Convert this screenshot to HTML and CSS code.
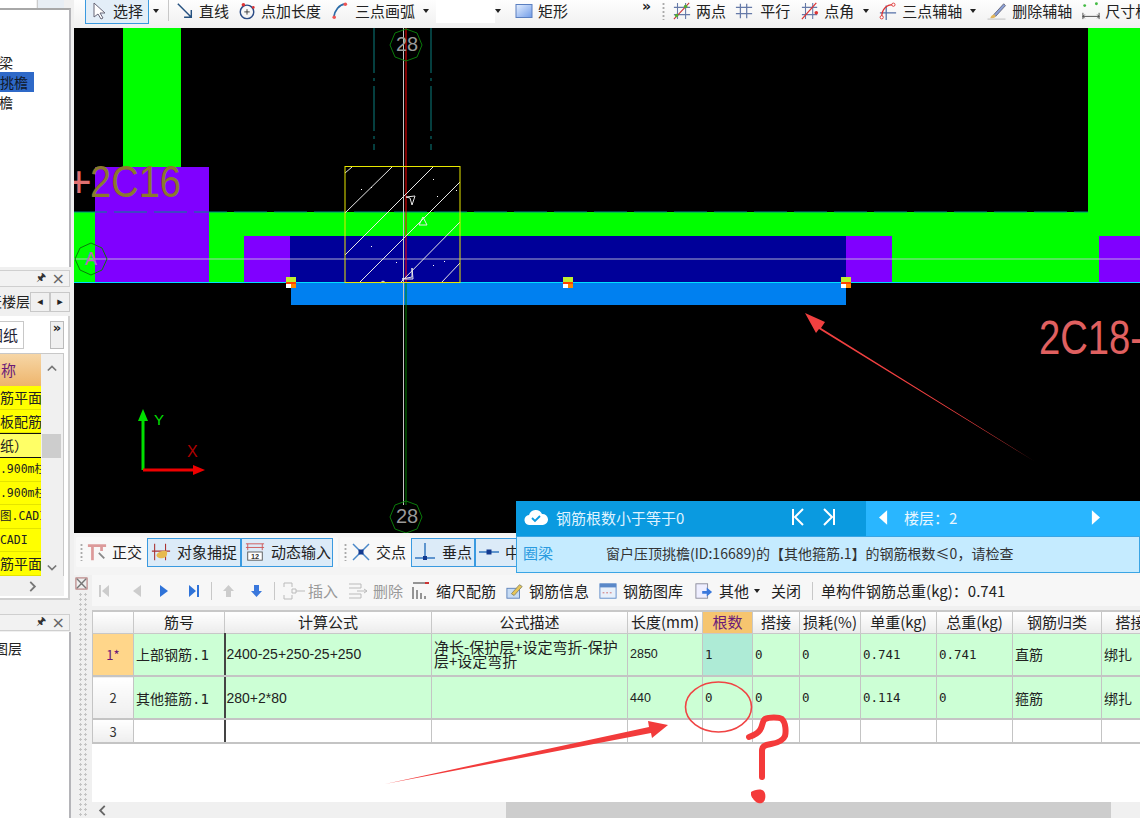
FILE: index.html
```html
<!DOCTYPE html>
<html lang="zh">
<head>
<meta charset="utf-8">
<title>钢筋</title>
<link rel="stylesheet" href="styles.css">
</head>
<body>
<div class="app">
  <aside class="left">
    <div class="stub"><div class="stub-a"></div><div class="stub-b"></div></div>
    <div class="tree">
      <div class="clip t1"><span>圈梁</span></div>
      <div class="clip t2"><span>窗户压顶挑檐</span></div>
      <div class="clip t3"><span>压顶挑檐</span></div>
    </div>
    <div class="phead"><span class="pin">🖈</span><span class="xx">×</span></div>
    <div class="floors">
      <div class="clip f1"><span>首层天楼层</span></div>
      <div class="fbtn">◂</div><div class="fbtn">▸</div>
    </div>
    <div class="body2">
      <div class="tabs">
        <div class="clip tab"><span>图纸</span></div>
        <div class="more">»</div>
      </div>
      <div class="listbox">
        <div class="list">
          <div class="clip lh"><span>名称</span></div>
          <div class="clip li c14"><span>钢筋平面图</span></div>
          <div class="clip li c14"><span>楼板配筋平面</span></div>
          <div class="clip li sel c14"><span>图纸）</span></div>
          <div class="clip li m c7"><span>3.900m柱</span></div>
          <div class="clip li m c7"><span>6.900m柱</span></div>
          <div class="clip li m"><span>图.CADI</span></div>
          <div class="clip li m c7"><span>.CADI</span></div>
          <div class="clip li c14"><span>钢筋平面图</span></div>
        </div>
        <div class="vbar">
          <svg class="chev" viewBox="0 0 12 8"><path d="M1 7l5-5 5 5" fill="none" stroke="#777" stroke-width="2"/></svg>
          <div class="vthumb"></div>
          <svg class="chev" viewBox="0 0 12 8"><path d="M1 1l5 5 5-5" fill="none" stroke="#777" stroke-width="2"/></svg>
        </div>
      </div>
      <div class="hbar"><svg class="chev2" viewBox="0 0 8 12"><path d="M1 1l5 5-5 5" fill="none" stroke="#777" stroke-width="2"/></svg></div>
    </div>
    <div class="phead p3"><span class="pin">🖈</span><span class="xx">×</span></div>
    <div class="tree2"><div class="clip l3"><span>图层</span></div></div>
  </aside>

  <main class="main">
    <div class="bar top">
      <div class="tool sel-tool">
        <svg class="ic i14" viewBox="0 0 14 18"><path d="M2 1v14l4-3 3 5 2-1-3-5h5z" fill="#fff" stroke="#667"/></svg><span>选择</span>
      </div>
      <span class="caret c1"></span><span class="sep s1"></span>
      <div class="tool t-line"><svg class="ic" viewBox="0 0 20 20"><path d="M2 2l15 15M17 9v8H9" fill="none" stroke="#25507f" stroke-width="1.6"/></svg><span>直线</span></div>
      <div class="tool t-len"><svg class="ic" viewBox="0 0 20 20"><circle cx="10" cy="11" r="7.5" fill="none" stroke="#2b4c86" stroke-width="1.6"/><path d="M7 11h6M10 8v6" stroke="#333"/><circle cx="6" cy="3" r="2" fill="#d33"/><circle cx="17" cy="6" r="1.5" fill="#d33"/></svg><span>点加长度</span></div>
      <div class="tool t-arc"><svg class="ic" viewBox="0 0 18 20"><path d="M2 17C3 9 8 3 15 2" fill="none" stroke="#2b6ca8" stroke-width="2"/><circle cx="2.500" cy="17" r="2" fill="#e55"/><circle cx="15" cy="2.500" r="2" fill="#e55"/></svg><span>三点画弧</span></div>
      <span class="caret c2"></span>
      <div class="combo"></div><span class="caret c3"></span>
      <div class="tool t-rect"><svg class="ic" viewBox="0 0 18 16"><defs><linearGradient id="rg" x1="0" y1="0" x2="1" y2="1"><stop offset="0" stop-color="#e6f0ff"/><stop offset="1" stop-color="#6f9be8"/></linearGradient></defs><rect x="1" y="1.500" width="16" height="13" fill="url(#rg)" stroke="#5a7fc0"/></svg><span>矩形</span></div>
      <span class="chev-more">»</span><span class="grip g-top"></span>
      <div class="tool t-two"><svg class="ic" viewBox="0 0 20 20"><path d="M5 1v18M14 1v18M1 6h18M1 14h18" stroke="#667aa8" stroke-width="1.200"/><path d="M1 19L18 1" stroke="#c33" stroke-width="1.200"/><circle cx="4" cy="15" r="2" fill="#5a3"/><circle cx="14" cy="5" r="2" fill="#5a3"/></svg><span>两点</span></div>
      <div class="tool t-par"><svg class="ic" viewBox="0 0 20 20"><path d="M6 2v16M13 2v16M1 6h18M1 13h18" stroke="#667aa8" stroke-width="1.400"/></svg><span>平行</span></div>
      <div class="tool t-ang"><svg class="ic" viewBox="0 0 20 20"><path d="M5 1v18M13 1v18M1 6h17M1 14h17" stroke="#667aa8" stroke-width="1.200"/><path d="M1 19L17 1" stroke="#d33" stroke-width="1.400"/><circle cx="17" cy="12" r="2" fill="#d33"/></svg><span>点角</span></div>
      <span class="caret c4"></span>
      <div class="tool t-axis"><svg class="ic" viewBox="0 0 20 20"><path d="M8 4v16M1 12h18" stroke="#5570a8" stroke-width="1.400"/><path d="M3 17C3 8 8 3 16 3" fill="none" stroke="#d33" stroke-width="1.400"/><circle cx="3" cy="17" r="1.800" fill="#fff" stroke="#d33"/><circle cx="16" cy="3" r="1.800" fill="#fff" stroke="#d33"/></svg><span>三点辅轴</span></div>
      <span class="caret c5"></span>
      <div class="tool t-del"><svg class="ic i21" viewBox="0 0 22 20"><path d="M8 14L19 2l2 2L10 16z" fill="#8aa0d8" stroke="#667"/><path d="M4 18c1-3 3-4 5-4l1 2c-1 2-3 2-6 2z" fill="#e2b65a"/><path d="M1 19h20" stroke="#bbb"/></svg><span>删除辅轴</span></div>
      <div class="tool t-dim"><svg class="ic" viewBox="0 0 20 20"><circle cx="3" cy="4" r="1.600" fill="#4b4"/><circle cx="16" cy="2" r="1.600" fill="#4b4"/><path d="M1 12v7M19 12v7M1 16h18M3 14l-2 2 2 2M17 14l2 2-2 2" fill="none" stroke="#444"/></svg><span>尺寸标注</span></div>
    </div>

    <div class="canvas">
      <svg class="cad" viewBox="74 28 1066 505">
        <rect x="74" y="28" width="1066" height="505" fill="#000"/>
        <rect x="123" y="28" width="58" height="140" fill="#00ff00"/>
        <rect x="1088" y="28" width="52" height="185" fill="#00ff00"/>
        <rect x="74" y="212" width="1066" height="70" fill="#00ff00"/>
        <rect x="95" y="167" width="114" height="115" fill="#8000ff"/>
        <rect x="244" y="236" width="648" height="46" fill="#8000ff"/>
        <rect x="290" y="236" width="556" height="46" fill="#000099"/>
        <rect x="1099" y="236" width="41" height="46" fill="#8000ff"/>
        <rect x="291" y="283" width="555" height="22" fill="#0080f0"/>
        <path d="M74 212H1088" stroke="#008a8a" stroke-dasharray="33 7"/>
        <path d="M374 28V150M431 28V150" stroke="#0a7f7f" stroke-dasharray="45 5 3 5"/>
        <path d="M74 282.500H1140" stroke="#00dfff"/>
        <path d="M74 259H1140" stroke="#c8c8d8" stroke-width="1" opacity=".85"/>
        <path d="M403.500 28V505" stroke="#c4c4c4"/>
        <path d="M406 28V283" stroke="#ff0000"/>
        <path d="M406 283V505" stroke="#008000"/>
        <g fill="none" stroke="#e8e8e8">
          <path d="M345 213L392 167M345 255L433 167M359 283L460 182M400 283L460 222M441 283L460 263M345 173L352 167"/>
          <path d="M406 197l9-1-3 9-2-7zM419 225l4-8 4 8zM402 279l10-2v-9l1 11zM380 283l3-2 3 2"/>
        </g>
        <g fill="#fff"><rect x="361" y="189" width="1" height="1"/><rect x="371" y="187" width="1" height="1"/><rect x="433" y="179" width="1" height="1"/><rect x="437" y="196" width="1" height="1"/><rect x="456" y="190" width="1" height="1"/><rect x="371" y="246" width="1" height="1"/><rect x="433" y="265" width="1" height="1"/><rect x="444" y="261" width="1" height="1"/><rect x="396" y="262" width="1" height="1"/></g>
        <rect x="345" y="166.500" width="115" height="116" fill="none" stroke="#e8e800" stroke-width="1"/>
        <g class="handle"><rect x="286" y="277" width="10" height="5" fill="#c0ee30"/><rect x="286" y="282" width="10" height="2" fill="#f40"/><rect x="286" y="284" width="5" height="4" fill="#fff"/><rect x="291" y="284" width="5" height="4" fill="#f80"/></g>
        <g class="handle"><rect x="563" y="277" width="10" height="5" fill="#c0ee30"/><rect x="563" y="282" width="10" height="2" fill="#f40"/><rect x="563" y="284" width="5" height="4" fill="#fff"/><rect x="568" y="284" width="5" height="4" fill="#f80"/></g>
        <g class="handle"><rect x="841" y="277" width="10" height="5" fill="#c0ee30"/><rect x="841" y="282" width="10" height="2" fill="#f40"/><rect x="841" y="284" width="5" height="4" fill="#fff"/><rect x="846" y="284" width="5" height="4" fill="#f80"/></g>
        <polygon points="406,29 417,33 422,45 417,57 406,61 395,57 390,45 395,33" fill="none" stroke="#0a7a0a"/>
        <polygon points="406,501 417,505 422,517 417,529 406,533 395,529 390,517 395,505" fill="none" stroke="#0a7a0a"/>
        <polygon points="91,243 102,248 107,259 102,270 91,275 80,270 75,259 80,248" fill="none" stroke="#0a7a0a"/>
        <text class="axis" x="407" y="51" text-anchor="middle">28</text>
        <text class="axis" x="407" y="523" text-anchor="middle">28</text>
        <text class="axis-a" x="91" y="265" text-anchor="middle">A</text>
        <text class="big big1" x="66" y="197">+</text>
        <text class="big big2" x="90" y="197" textLength="91" lengthAdjust="spacingAndGlyphs">2C16</text>
        <text class="big big3" x="1039" y="354" textLength="104" lengthAdjust="spacingAndGlyphs">2C18-</text>
        <path d="M143 470V418" stroke="#00e000" stroke-width="3"/>
        <path d="M143 409l-5 12h10z" fill="#00e000"/>
        <path d="M143 470H195" stroke="#ee0000" stroke-width="3"/>
        <path d="M205 470l-12-5v10z" fill="#ee0000"/>
        <text class="ax-y" x="154" y="425">Y</text>
        <text class="ax-x" x="187" y="457">X</text>
      </svg>
      <section class="popup">
        <div class="ptitle">
          <div class="pt-left">
            <svg class="cloud" viewBox="0 0 24 18"><path d="M6 17a5 5 0 0 1-1-10 7 7 0 0 1 13-1 5.500 5.500 0 0 1 1 11z" fill="#fff"/><path d="M8 10l3 3 5-5" fill="none" stroke="#0a9ae0" stroke-width="1.800"/></svg>
            <span class="ptxt">钢筋根数小于等于0</span>
            <svg class="kk" viewBox="0 0 14 18"><path d="M2 1v16M12 1L4 9l8 8" fill="none" stroke="#fff" stroke-width="2"/></svg>
            <svg class="kk k2" viewBox="0 0 14 18"><path d="M12 1v16M2 1l8 8-8 8" fill="none" stroke="#fff" stroke-width="2"/></svg>
          </div>
          <div class="pt-right">
            <svg class="tri" viewBox="0 0 10 16"><path d="M9 0v16L0 8z" fill="#fff"/></svg>
            <span class="floor">楼层：2</span>
            <svg class="tri tr2" viewBox="0 0 10 16"><path d="M1 0v16l9-8z" fill="#fff"/></svg>
          </div>
        </div>
        <div class="pbody"><span class="link">圈梁</span><span class="msg">窗户压顶挑檐(ID:16689)的【其他箍筋.1】的钢筋根数≤0，请检查</span></div>
      </section>
    </div>

    <div class="snap">
      <div class="snapgroup g1">
        <span class="grip"></span>
        <div class="tool s-or"><svg class="ic" viewBox="0 0 22 20"><path d="M1 3h20M6 3v16M16 3v6" stroke="#dc9a9a" stroke-width="3" fill="none"/><path d="M13 11l6 6" stroke="#888" stroke-width="2"/></svg><span>正交</span></div>
        <div class="tool on s-obj"><svg class="ic" viewBox="0 0 22 20"><path d="M4 1v18M16 1v18M1 9h20" stroke="#a33" stroke-width="1.200"/><path d="M6 14c0-4 8-6 11-5 2 3 0 8-5 8-3 0-5-1-6-3z" fill="#e7b94e"/></svg><span>对象捕捉</span></div>
        <div class="tool on s-dyn"><svg class="ic" viewBox="0 0 22 20"><path d="M1 1h20M3 1v7M19 1v7M1 5h20" stroke="#c55" fill="none"/><rect x="3" y="10" width="16" height="9" fill="#fff" stroke="#555"/><text x="11" y="18" class="mini" text-anchor="middle">12</text></svg><span>动态输入</span></div>
      </div>
      <div class="snapgroup g2">
        <span class="grip"></span>
        <div class="tool s-cross"><svg class="ic" viewBox="0 0 20 20"><path d="M2 2l16 16M18 2L2 18" stroke="#4a88c8" stroke-width="1.500"/><rect x="7.500" y="7.500" width="5" height="5" fill="#123a90"/></svg><span>交点</span></div>
        <div class="tool on s-ft"><svg class="ic" viewBox="0 0 20 20"><path d="M10 1v15M0 16h20" stroke="#3478c0" stroke-width="1.500"/><rect x="8" y="14" width="4" height="4" fill="#123a90"/></svg><span>垂点</span></div>
        <div class="tool on s-mid"><svg class="ic" viewBox="0 0 20 20"><path d="M0 10h20" stroke="#3478c0" stroke-width="1.500"/><rect x="7.500" y="7.500" width="5" height="5" fill="#123a90"/></svg><span>中点</span></div>
      </div>
    </div>

    <div class="lower">
      <div class="gutter">
        <svg class="closer" viewBox="0 0 14 14"><rect x="1" y="1" width="12" height="12" fill="#eee" stroke="#a66"/><path d="M2 2l10 10M12 2L2 12" stroke="#777" stroke-width="1.500"/></svg>
        <div class="dots"></div>
      </div>
      <div class="gridwrap">
        <div class="pb-tools">
          <svg class="nv n1" viewBox="0 0 12 14"><path d="M1 1v12h2V1zM11 1v12L4 7z" fill="#ccc"/></svg>
          <svg class="nv n2" viewBox="0 0 8 14"><path d="M8 1v12L0 7z" fill="#ccc"/></svg>
          <svg class="nv n3" viewBox="0 0 8 14"><path d="M0 1v12l8-6z" fill="#2f73d8"/></svg>
          <svg class="nv n4" viewBox="0 0 12 14"><path d="M11 1v12H9V1zM1 1v12l7-6z" fill="#2f73d8"/></svg>
          <span class="sep s2"></span>
          <svg class="nv n5" viewBox="0 0 13 14"><path d="M6.500 1L12 7H9v6H4V7H1z" fill="#ccc"/></svg>
          <svg class="nv n6" viewBox="0 0 13 14"><path d="M6.500 13L12 7H9V1H4v6H1z" fill="#3a78dc"/></svg>
          <span class="sep s3"></span>
          <div class="ptool off p-ins"><svg class="ic pic" viewBox="0 0 24 18"><path d="M2 1h8v4M2 1v4M2 13v4h8v-4M14 9h9M10 7h4v4h-4z" fill="none" stroke="#bbb"/></svg><span>插入</span></div>
          <div class="ptool off p-del"><svg class="ic pic2" viewBox="0 0 22 18"><path d="M2 2h12v4H2M2 12h12v4H2M10 9h10M17 7l3 2-3 2" fill="none" stroke="#bbb"/></svg><span>删除</span></div>
          <div class="ptool p-scale"><svg class="ic pic3" viewBox="0 0 18 18"><path d="M1 1h12M1 5v12M5 8v9M9 11v6M13 14v3" stroke="#333"/><rect x="13" y="0" width="4" height="2" fill="#c33"/></svg><span>缩尺配筋</span></div>
          <div class="ptool p-info"><svg class="ic pic3" viewBox="0 0 20 18"><rect x="1" y="6" width="14" height="11" fill="#c7dcf4" stroke="#5a7fb8"/><path d="M6 12L15 2l3 2-9 10z" fill="#e8c558" stroke="#886"/></svg><span>钢筋信息</span></div>
          <div class="ptool p-lib"><svg class="ic pic3" viewBox="0 0 20 18"><rect x="1" y="1" width="18" height="16" fill="#e8f0fa" stroke="#5a88c8"/><rect x="1" y="1" width="18" height="4" fill="#5a88c8"/><path d="M4 11h2M8 11h2M12 11h2" stroke="#c66"/></svg><span>钢筋图库</span></div>
          <div class="ptool p-other"><svg class="ic pic3" viewBox="0 0 20 18"><rect x="1" y="1" width="13" height="16" fill="#eef" stroke="#889"/><path d="M8 9h5V5l6 5-6 5v-3H8z" fill="#3a78dc"/></svg><span>其他</span></div>
          <span class="caret c6"></span>
          <div class="ptool p-close"><span>关闭</span></div>
          <span class="sep s4"></span>
          <div class="ptool p-total"><span>单构件钢筋总重(kg)：0.741</span></div>
        </div>
        <div class="tablebox">
          <table class="rebar">
            <colgroup><col class="w0"><col class="w1"><col class="w2"><col class="w3"><col class="w4"><col class="w5"><col class="w6"><col class="w7"><col class="w8"><col class="w9"><col class="w10"><col class="w11"></colgroup>
            <thead><tr><th></th><th>筋号</th><th class="fc">计算公式</th><th>公式描述</th><th>长度(mm)</th><th class="hot">根数</th><th>搭接</th><th>损耗(%)</th><th>单重(kg)</th><th>总重(kg)</th><th>钢筋归类</th><th>搭接形式</th></tr></thead>
            <tbody>
              <tr class="tall"><td class="rh act">1*</td><td class="nm">上部钢筋.1</td><td class="fc fm">2400-25+250-25+250</td><td class="desc">净长-保护层+设定弯折-保护层+设定弯折</td><td class="f">2850</td><td class="cur n">1</td><td class="n">0</td><td class="n">0</td><td class="n">0.741</td><td class="n">0.741</td><td class="nm">直筋</td><td class="nm">绑扎</td></tr>
              <tr class="tall"><td class="rh">2</td><td class="nm">其他箍筋.1</td><td class="fc fm">280+2*80</td><td></td><td class="f">440</td><td class="n">0</td><td class="n">0</td><td class="n">0</td><td class="n">0.114</td><td class="n">0</td><td class="nm">箍筋</td><td class="nm">绑扎</td></tr>
              <tr class="empty"><td class="rh">3</td><td></td><td class="fc"></td><td></td><td></td><td></td><td></td><td></td><td></td><td></td><td></td><td></td></tr>
            </tbody>
          </table>
        </div>
        <div class="hscroll">
          <svg class="lar" viewBox="0 0 8 12"><path d="M7 1L2 6l5 5" fill="none" stroke="#666" stroke-width="2"/></svg>
          <div class="hthumb"></div>
        </div>
      </div>
    </div>
  </main>

  <svg class="marks" viewBox="0 0 1140 818">
    <path d="M1034 461L821 328 825 322 805 313 816 333 819 329Z" fill="#f04040"/>
    <path d="M385 784L651 733 652 738 668 725 648 721 649 727Z" fill="#f23b3b"/>
    <ellipse cx="718.500" cy="707" rx="33" ry="25" fill="none" stroke="#f04444" stroke-width="1.600"/>
    <path d="M749 737c6-2 9-4 11-7 3-4 2-9 5-11 4-2 14-2 17 0 4 4 4 13 3 17-2 5-8 7-14 8-6 1-9 2-9 7v26" fill="none" stroke="#f43a3a" stroke-width="6" stroke-linecap="round" stroke-linejoin="round"/>
    <path d="M751 792c3-2 8-3 11-2 3 1 4 5 3 9-1 4-4 5-7 4-3-1-6-5-7-8z" fill="#f43a3a"/>
  </svg>
</div>
</body>
</html>
```
FILE: styles.css
```css
* { box-sizing: border-box; }
html, body { margin: 0; padding: 0; }
body { width: 1140px; height: 818px; overflow: hidden; background: #f0f0f0; color: #222;
  font: 14px "Noto Sans CJK SC", "Liberation Sans", sans-serif; }
.app { position: relative; display: grid; grid-template-columns: 74px 1066px; width: 1140px; height: 818px; }

/* left */
.left { display: flex; flex-direction: column; background: #f0f0f0; overflow: hidden; height: 818px; }
.clip { display: flex; justify-content: flex-end; overflow: hidden; white-space: nowrap; flex: none; }
.stub { display: flex; gap: 1px; height: 8px; background: #f0f0f0; }
.stub-a { width: 36px; background: #fff; }
.stub-b { width: 27px; background: #e8eef4; border-left: 1px solid #ccc; }
.tree { width: 71px; height: 259px; background: #fff; border-top: 2px solid #a8a8a8; border-right: 2px solid #b4b4b8; padding-top: 42px; }
.t1, .t3 { width: 13px; height: 20px; line-height: 20px; }
.t2 { width: 34px; height: 20px; line-height: 20px; background: #2e69c8; color: #101828; padding-right: 6px; }
.phead { width: 70px; height: 17px; margin-top: 3px; background: #f2f2f2; border: 1px solid #cfcfcf; border-left: 0; display: flex; justify-content: flex-end; align-items: center; gap: 6px; padding-right: 4px; font-size: 12px; line-height: 15px; color: #333; }
.pin { font: 11px "DejaVu Sans", sans-serif; }
.xx { font: 16px "DejaVu Sans", sans-serif; color: #666; }
.floors { display: flex; height: 20px; margin-top: 5px; line-height: 19px; width: 70px; font-size: 14px; }
.f1 { width: 30px; }
.fbtn { flex: none; width: 20px; background: #f0f0f0; border: 1px solid #c8c8c8; text-align: center; font: 11px/18px "DejaVu Sans", sans-serif; }
.body2 { width: 70px; height: 284px; margin-top: 4px; padding-top: 5px; background: #fff; border-right: 2px solid #d0d0d0; border-bottom: 2px solid #d0d0d0; }
.tabs { display: flex; height: 28px; justify-content: space-between; padding-right: 4px; }
.tab { width: 24px; line-height: 26px; border: 1px solid #c8c8c8; border-left: 0; background: #fff; padding-right: 5px; font-size: 15px; color: #223; }
.more { width: 14px; border: 1px solid #bbb; background: #f0f0f0; font: bold 13px/12px "DejaVu Sans", sans-serif; text-align: center; }
.listbox { display: flex; width: 64px; height: 223px; margin-top: 4px; background: #f0f0f0; border-top: 1px solid #c8c8c8; border-right: 1px solid #c8c8c8; }
.list { width: 41px; font-size: 14px; }
.lh { height: 32px; line-height: 32px; color: #6a1a78; background: linear-gradient(#f6d6a6, #eeb56c); padding-right: 25px; font-size: 15px; }
.li { height: 23.500px; line-height: 23px; background: #ffff00; border-bottom: 1px solid #e4e400; justify-content: flex-start; }
.li.sel { height: 25px; background: #ffff66; border-top: 1px solid #111; border-bottom: 1px solid #111; }
.li.m { font: 11.500px/23px "DejaVu Sans Mono", "Noto Sans CJK SC", monospace; }
.c14 span { margin-left: -14px; }
.c7 span { margin-left: -7px; }
.vbar { flex: 1; position: relative; display: flex; flex-direction: column; justify-content: space-between; align-items: center; padding: 10px 0 4px; }
.chev { width: 10px; height: 8px; display: block; }
.vthumb { position: absolute; top: 80px; left: 1px; width: 19px; height: 24px; background: #cdcdcd; }
.hbar { width: 64px; height: 20px; background: #f0f0f0; display: flex; justify-content: flex-end; align-items: center; padding-right: 27px; }
.chev2 { width: 8px; height: 11px; }
.p3 { margin-top: 14px; }
.tree2 { width: 71px; flex: 1; margin-top: 1px; background: #fff; border-right: 2px solid #b4b4b8; padding-top: 6px; }
.l3 { width: 22px; line-height: 20px; }

/* main */
.main { display: flex; flex-direction: column; height: 818px; min-width: 0; }
.bar.top { position: relative; height: 28px; flex: none; display: flex; align-items: center; padding: 0 0 7px 11px; background: linear-gradient(#fefefe, #f0f0f0); white-space: nowrap; overflow: hidden; font-size: 15px; }
.tool { display: flex; align-items: center; gap: 5px; flex: none; font-size: 15px; line-height: 20px; color: #222; white-space: nowrap; }
.ic { width: 18px; height: 18px; flex: none; display: block; }
.i14 { width: 14px; }
.i21 { width: 21px; }
.sel-tool { width: 64px; height: 26px; padding-left: 6px; gap: 7px; border: 1px solid #3a9ae0; background: #e3eef8; }
.caret { flex: none; width: 0; height: 0; border: 3px solid transparent; border-top: 4px solid #222; border-bottom: 0; }
.c1 { margin-left: 4px; }
.sep { flex: none; width: 1px; height: 21px; background: #c8c8c8; }
.s1 { margin-left: 9px; }
.t-line { margin-left: 7px; }
.t-len { margin-left: 9px; }
.t-arc { margin-left: 11px; gap: 7px; }
.t-arc .ic { width: 16px; }
.c2 { margin-left: 8px; }
.combo { flex: none; width: 59px; height: 25px; margin-left: 7px; background: #fff; }
.c3 { margin-left: 0; }
.t-rect { margin-left: 14px; }
.chev-more { flex: none; margin-left: 74px; margin-top: -9px; font: bold 14px/14px "DejaVu Sans", sans-serif; }
.grip { flex: none; width: 3px; height: 18px; background: radial-gradient(circle, #aaa 1px, transparent 1.200px) 0 0 / 3px 4px; }
.g-top { margin-left: 11px; }
.t-two { margin-left: 8px; }
.t-par { margin-left: 9px; gap: 7px; }
.t-ang { margin-left: 11px; }
.c4 { margin-left: 9px; }
.t-axis { margin-left: 10px; }
.c5 { margin-left: 8px; }
.t-del { margin-left: 10px; }
.t-dim { margin-left: 10px; }

.canvas { position: relative; height: 505px; background: #000; flex: none; }
.cad { display: block; width: 1066px; height: 505px; }
.axis { font: 20px "Liberation Sans", sans-serif; fill: #999; }
.axis-a { font: 18px "Liberation Sans", sans-serif; fill: #c060c8; }
.big { font-family: "Liberation Sans", sans-serif; }
.big1 { fill: #e07070; font-size: 44px; }
.big2 { fill: #8a7a2c; font-size: 44px; }
.big3 { fill: #e06060; font-size: 48px; }
.ax-y { font: 15px "Liberation Sans", sans-serif; fill: #00e000; }
.ax-x { font: 16px "Liberation Sans", sans-serif; fill: #b00000; }

.popup { position: absolute; right: 0; top: 473px; width: 624px; height: 72px; z-index: 2; color: #444; }
.ptitle { display: flex; height: 35px; }
.pt-left { width: 350px; background: #0a9ae0; display: flex; align-items: center; padding: 0 0 3px 8px; color: #dff2ff; font-size: 15px; }
.cloud { width: 24px; height: 18px; flex: none; }
.ptxt { margin-left: 8px; width: 235px; }
.kk { width: 14px; height: 18px; flex: none; }
.k2 { margin-left: 17px; }
.pt-right { flex: 1; background: #29b6ff; display: flex; align-items: center; padding: 0 0 3px 13px; color: #e8f6ff; font-size: 15px; }
.tri { width: 9px; height: 15px; flex: none; }
.floor { margin-left: 16px; width: 187px; }
.pbody { height: 37px; display: flex; align-items: center; background: #c5ebff; border: 1px solid #3aa5e5; padding: 0 0 4px 6px; font-size: 14px; line-height: 20px; }
.link { color: #2a9be0; font-size: 15px; }
.msg { margin-left: 53px; color: #333; }

.snap { height: 42px; flex: none; display: flex; align-items: flex-start; padding: 4px 0 0 2px; background: #f4f4f4; }
.snapgroup { display: flex; align-items: center; height: 30px; background: #f8f8f8; border-radius: 2px; overflow: hidden; flex: none; }
.g1 { width: 262px; padding-left: 4px; }
.g2 { width: 300px; padding-left: 4px; margin-left: 2px; }
.snap .ic { width: 20px; height: 20px; }
.s-or { margin-left: 4px; }
.on { height: 29px; border: 1px solid #3a9ae0; background: #dcebf8; padding-left: 3px; gap: 6px; }
.s-obj { margin-left: 5px; width: 94px; }
.s-dyn { width: 92px; }
.mini { font: bold 8px "Liberation Sans", sans-serif; fill: #333; }
.s-cross { margin-left: 4px; }
.s-ft { margin-left: 5px; width: 64px; gap: 7px; }
.s-mid { width: 60px; }

/* lower: property bar and table */
.lower { flex: 1; display: flex; min-height: 0; background: #f0f0f0; }
.gutter { width: 18px; flex: none; display: flex; flex-direction: column; padding-left: 1px; }
.closer { width: 13px; height: 13px; margin-top: 2px; flex: none; }
.dots { flex: 1; width: 11px; margin: 2px 0 0 3px; background: radial-gradient(circle, #c4c4c4 1px, transparent 1.300px) 0 0 / 5px 5px; }
.gridwrap { width: 1048px; display: flex; flex-direction: column; background: #fff; }
.pb-tools { display: flex; align-items: center; height: 35px; flex: none; background: #f7f7f7; border-bottom: 4px solid #f0f0f0; padding-left: 6px; white-space: nowrap; }
.nv { height: 14px; flex: none; }
.n1 { width: 12px; }
.n2 { width: 8px; margin-left: 23px; }
.n3 { width: 8px; margin-left: 19px; }
.n4 { width: 12px; margin-left: 20px; }
.s2 { margin-left: 11px; height: 18px; }
.n5 { width: 13px; margin-left: 10px; }
.n6 { width: 13px; margin-left: 15px; }
.s3 { margin-left: 11px; height: 18px; }
.ptool { display: flex; align-items: center; gap: 4px; flex: none; font-size: 15px; line-height: 20px; color: #222; }
.off { color: #999; }
.pic { width: 24px; height: 18px; }
.pic2 { width: 22px; height: 18px; }
.pic3 { width: 18px; height: 18px; }
.p-ins { margin-left: 7px; gap: 2px; }
.p-del { margin-left: 9px; }
.p-scale { margin-left: 9px; gap: 6px; }
.p-info { margin-left: 10px; gap: 5px; }
.p-lib { margin-left: 10px; gap: 6px; }
.p-other { margin-left: 12px; gap: 6px; }
.c6 { margin-left: 5px; }
.p-close { margin-left: 11px; }
.s4 { margin-left: 11px; height: 18px; }
.p-total { margin-left: 8px; }

.tablebox { flex: 1; overflow: hidden; background: #fff; min-height: 0; }
.rebar { table-layout: fixed; width: 1097px; border-collapse: collapse; font-size: 14px; }
.w0 { width: 41px; } .w1 { width: 91px; } .w2 { width: 207px; } .w3 { width: 196px; } .w4 { width: 75px; } .w5 { width: 50px; }
.w6 { width: 47px; } .w7 { width: 61px; } .w8 { width: 76px; } .w9 { width: 76px; } .w10 { width: 89px; } .w11 { width: 88px; }
.rebar th { height: 22px; padding: 0; font-weight: 400; font-size: 15px; line-height: 20px; color: #222; background: linear-gradient(#fff, #ececec); border: 1px solid #c8c8c8; border-top: 2px solid #c8c8c8; white-space: nowrap; overflow: hidden; }
.rebar th.hot { background: #f6c56f; color: #6a1a78; }
.rebar td { padding: 0 0 0 2px; border: 1px solid #c4c4c4; border-bottom-width: 2px; white-space: nowrap; overflow: hidden; }
.tall { height: 43px; }
.tall td { background: #ccffd5; }
.empty { height: 24px; }
.empty td { background: #fff; }
.rebar td.rh { padding: 0; text-align: center; background: linear-gradient(#fff, #eee); font-size: 13px; color: #333; }
.rebar td.act { background: #ffd68a; color: #6a1a78; }
.rebar td.cur { background: #aeebd6; }
.nm { font: 14px "DejaVu Sans Mono", "Noto Sans CJK SC", monospace; }
.f { font: 12.500px "Liberation Sans", sans-serif; color: #222; }
.rebar td.fm { font: 14px "Liberation Sans", sans-serif; padding-left: 1px; color: #222; }
.n { font: 12.500px "DejaVu Sans Mono", monospace; color: #222; }
.rebar td.desc { white-space: normal; font-size: 15px; line-height: 14px; }
.rebar .fc { border-left: 2px solid #444; }
.rebar th.fc { border-left: 1px solid #c8c8c8; }
.hscroll { position: relative; height: 16px; flex: none; background: #f0f0f0; padding-left: 414px; }
.lar { position: absolute; left: 6px; top: 3px; width: 8px; height: 11px; }
.hthumb { width: 605px; height: 16px; background: #cdcdcd; }

.marks { position: absolute; left: 0; top: 0; width: 1140px; height: 818px; z-index: 5; pointer-events: none; }
```
